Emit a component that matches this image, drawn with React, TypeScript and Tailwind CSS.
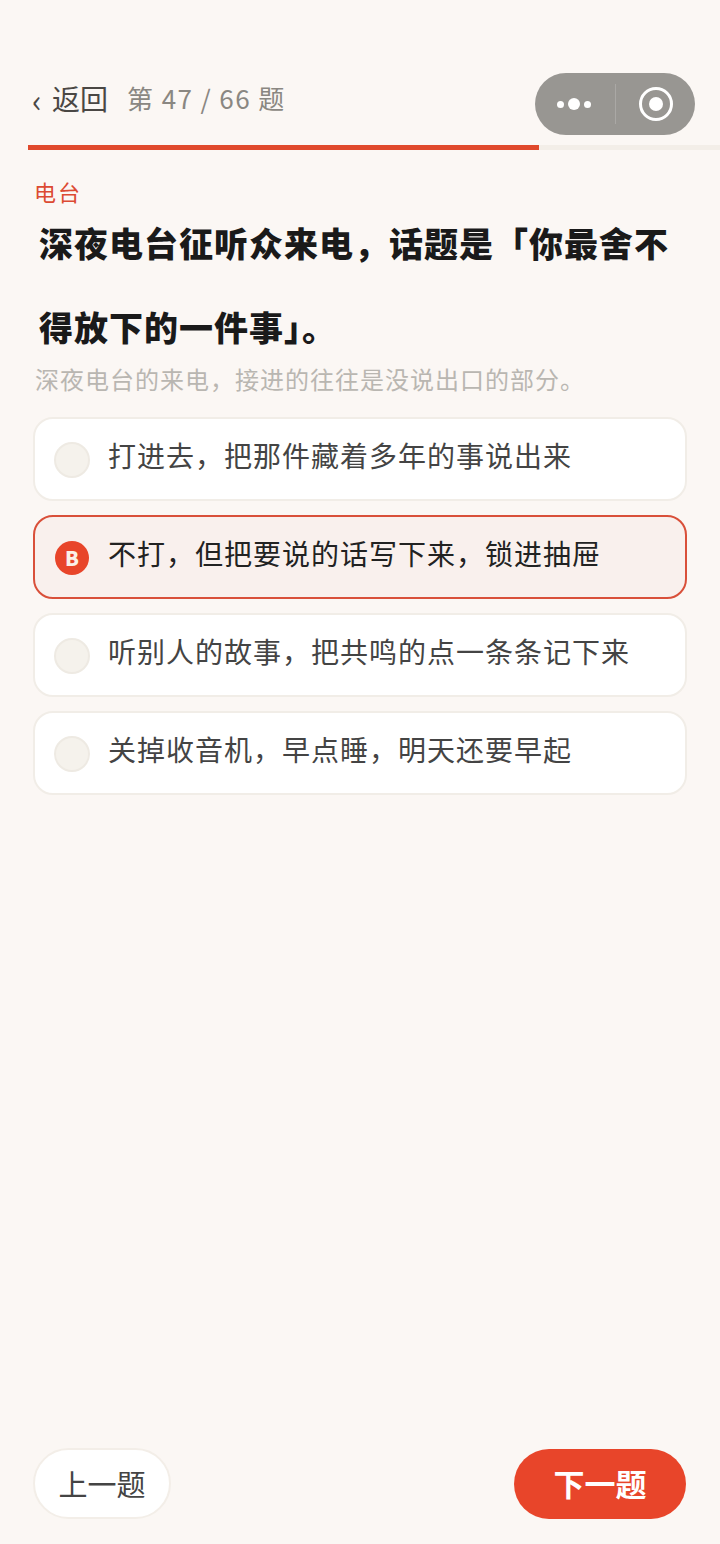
const font = "font-['Noto_Sans_CJK_SC','Noto_Sans',sans-serif]";

const options = [
  { letter: "A", text: "打进去，把那件藏着多年的事说出来" },
  { letter: "B", text: "不打，但把要说的话写下来，锁进抽屉", selected: true },
  { letter: "C", text: "听别人的故事，把共鸣的点一条条记下来" },
  { letter: "D", text: "关掉收音机，早点睡，明天还要早起" },
];

function Capsule() {
  return (
    <div className="absolute left-[535px] top-[73px] flex h-[62px] w-[160px] items-center rounded-full bg-[#989692]">
      <div className="flex w-[80px] items-center justify-center gap-[4px] pr-[2px]">
        <span className="h-[7px] w-[7px] rounded-full bg-white" />
        <span className="h-[12px] w-[12px] rounded-full bg-white" />
        <span className="h-[7px] w-[7px] rounded-full bg-white" />
      </div>
      <div className="h-[40px] w-px bg-[#aaa8a5]" />
      <div className="flex flex-1 items-center justify-center">
        <div className="flex h-[34px] w-[34px] items-center justify-center rounded-full border-[3px] border-white">
          <span className="h-[14px] w-[14px] rounded-full bg-white" />
        </div>
      </div>
    </div>
  );
}

export default function App() {
  return (
    <div className={`relative flex h-[1544px] w-[720px] flex-col bg-[#fbf7f4] ${font}`}>
      <Capsule />
      <header className="flex h-[145px] items-start pl-[32px] pt-[78px]">
        <span className="w-[20px] text-[32px] leading-[42px] text-[#4a4744]">‹</span>
        <span className="text-[28px] leading-[40px] text-[#4a4744]">返回</span>
        <span className="ml-[19px] text-[26px] leading-[40px] tracking-[1.4px] text-[#8a8782]">第 47 / 66 题</span>
      </header>
      <div className="ml-[28px] h-[5px] bg-[#f3eee8]">
        <div className="h-full w-[511px] bg-[#e0492c]" />
      </div>
      <main className="flex flex-1 flex-col px-[35px] pt-[26px]">
        <div className="-ml-px text-[22px] leading-[30px] tracking-[2px] text-[#dc4a32]">电台</div>
        <h1 className="-mt-[5px] pl-[4px] text-[34px] font-black leading-[84px] tracking-[1px] text-[#1a1a1a]">
          深夜电台征听众来电，话题是「你最舍不得放下的一件事」。
        </h1>
        <p className="-mt-[8px] text-[24px] leading-[36px] tracking-[1px] text-[#b9b6b1]">
          深夜电台的来电，接进的往往是没说出口的部分。
        </p>
        <ul className="mt-[20px] -ml-[2px] flex w-[654px] flex-col gap-[14px]">
          {options.map((o) => (
            <li
              key={o.letter}
              className={
                o.selected
                  ? "flex h-[84px] items-center rounded-[20px] border-2 border-[#d9503a] bg-[#f9f0ed] pl-[20px]"
                  : "flex h-[84px] items-center rounded-[20px] border-2 border-[#f1ede7] bg-white pl-[19px]"
              }
            >
              {o.selected ? (
                <span className="mt-[2px] flex h-[34px] w-[34px] shrink-0 items-center justify-center rounded-full bg-[#e8452a] text-[20px] font-black text-[#fbf0e8]">
                  {o.letter}
                </span>
              ) : (
                <span className="mt-[2px] h-[36px] w-[36px] shrink-0 rounded-full border-2 border-[#eeeae3] bg-[#f5f2ec]" />
              )}
              <span
                className={
                  o.selected
                    ? "ml-[19px] -mt-[9px] text-[28px] tracking-[1px] text-[#222222]"
                    : "ml-[18px] -mt-[9px] text-[28px] tracking-[1px] text-[#444444]"
                }
              >
                {o.text}
              </span>
            </li>
          ))}
        </ul>
      </main>
      <footer className="flex items-center justify-between pb-[25px] pl-[33px] pr-[34px]">
        <button className="h-[71px] w-[138px] rounded-full border-2 border-[#f3eee8] bg-white text-[29px] text-[#444444]">
          上一题
        </button>
        <button className="h-[70px] w-[172px] rounded-full bg-[#e8452a] text-[31px] font-bold text-white">
          下一题
        </button>
      </footer>
    </div>
  );
}
